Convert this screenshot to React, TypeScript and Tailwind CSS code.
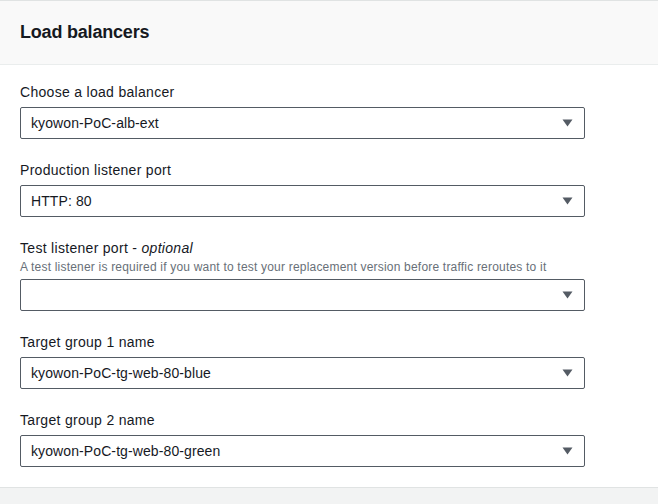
import React from "react";

type Field = {
  label: string;
  optional?: boolean;
  description?: string;
  value: string;
};

const fields: Field[] = [
  { label: "Choose a load balancer", value: "kyowon-PoC-alb-ext" },
  { label: "Production listener port", value: "HTTP: 80" },
  {
    label: "Test listener port",
    optional: true,
    description:
      "A test listener is required if you want to test your replacement version before traffic reroutes to it",
    value: "",
  },
  { label: "Target group 1 name", value: "kyowon-PoC-tg-web-80-blue" },
  { label: "Target group 2 name", value: "kyowon-PoC-tg-web-80-green" },
];

const Caret = () => (
  <svg width="11" height="8" viewBox="0 0 11 8" className="shrink-0">
    <path d="M0.5 0.5 H10.5 L5.5 7.5 Z" fill="#545b64" />
  </svg>
);

const SelectField: React.FC<{ field: Field }> = ({ field }) => (
  <div className="flex flex-col">
    <label className="text-[14px] leading-[22px] tracking-[0.3px] text-[#16191f]">
      {field.label}
      {field.optional && (
        <>
          {" - "}
          <i>optional</i>
        </>
      )}
    </label>
    {field.description && (
      <p className="text-[12px] leading-[16px] tracking-[0.2px] text-[#687078]">
        {field.description}
      </p>
    )}
    <div className="mt-[4px] h-[32px] w-[565px] flex items-center justify-between border border-[#545b64] rounded-[2px] bg-white pl-[10px] pr-[11px]">
      <span className="text-[14px] tracking-[0.1px] text-[#16191f]">
        {field.value}
      </span>
      <Caret />
    </div>
  </div>
);

export default function App() {
  return (
    <div
      className="w-[658px] h-[504px] bg-[#f2f3f3] flex flex-col"
      style={{ fontFamily: '"Liberation Sans", Arial, sans-serif' }}
    >
      <section className="bg-white border-t border-b border-[#e0e3e3]">
        <header className="h-[64px] bg-[#f9f9f9] border-b border-[#eaeded] flex items-center px-[20px]">
          <h2 className="text-[18px] font-bold tracking-[-0.2px] text-[#16191f]">
            Load balancers
          </h2>
        </header>
        <div className="px-[20px] pt-[16px] pb-[20px] flex flex-col gap-[20px]">
          {fields.map((f) => (
            <SelectField key={f.label} field={f} />
          ))}
        </div>
      </section>
    </div>
  );
}
